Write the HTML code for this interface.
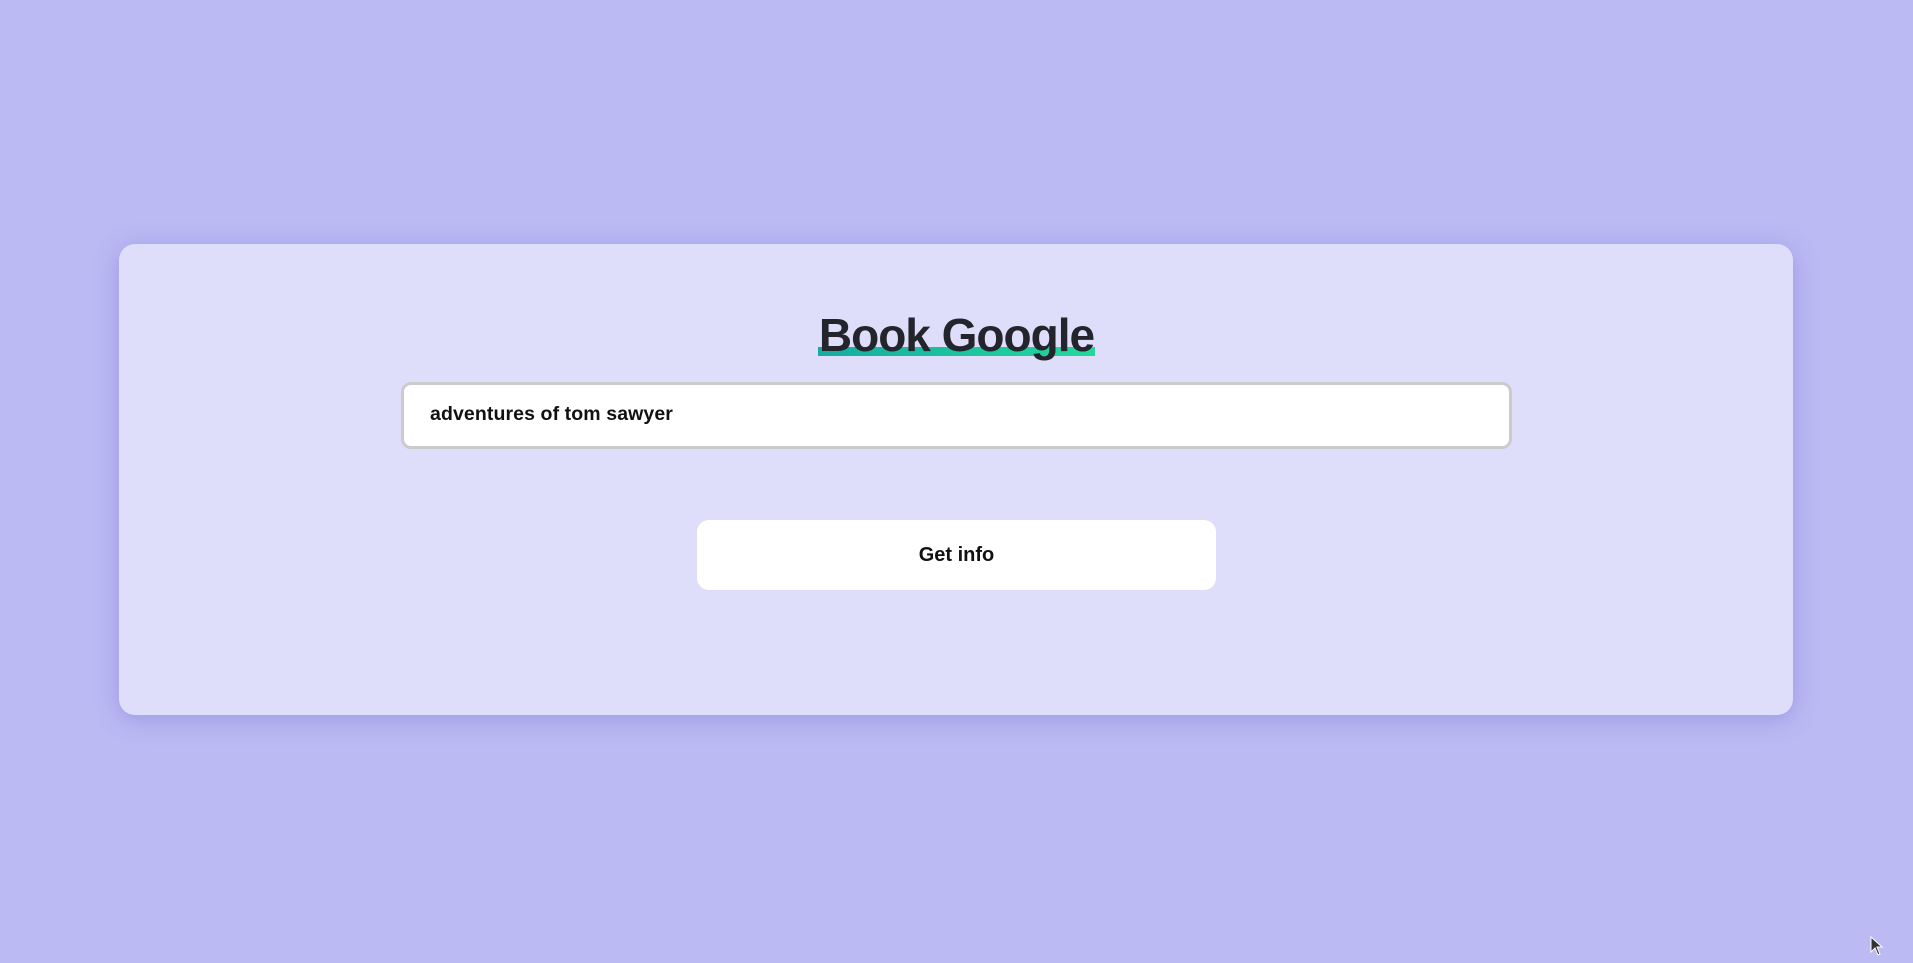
<!DOCTYPE html>
<html><head><style>
html,body{margin:0;padding:0;width:1913px;height:963px;background:#bbbaf3;font-family:"Liberation Sans",sans-serif;overflow:hidden}
.card{position:absolute;left:119px;top:244px;width:1674px;height:471px;background:#dedefa;border-radius:16px;box-shadow:0 4px 24px rgba(120,110,210,.45)}
.title{position:absolute;left:0;right:0;top:308px;text-align:center;font-size:46px;font-weight:bold;color:#24242c;letter-spacing:-1px;z-index:1}
.title span{position:relative;display:inline-block;padding:0 1px}
.title span:after{content:"";position:absolute;left:0;right:0;bottom:6px;height:9px;background:linear-gradient(90deg,#16aca3,#23d99b);z-index:-1}
.input{position:absolute;left:401px;top:382px;width:1105px;height:61px;background:#fff;border:3px solid #cbcbcb;border-radius:10px;box-sizing:content-box}
.input div{position:absolute;left:26px;top:18px;font-size:19.5px;font-weight:bold;color:#111;letter-spacing:0.1px}
.btn{position:absolute;left:697px;top:520px;width:519px;height:70px;background:#fff;border-radius:12px;text-align:center;line-height:70px;font-size:20px;font-weight:bold;color:#111}
</style></head><body>
<div class="card"></div>
<div class="title"><span>Book Google</span></div>
<div class="input"><div>adventures of tom sawyer</div></div>
<div class="btn">Get info</div>
<svg style="position:absolute;left:1870px;top:936px" width="14" height="20" viewBox="0 0 14 20"><path d="M1 1 L1 16 L5 12 L8 19 L10 18 L7 11 L12 11 Z" fill="#333" stroke="#fff" stroke-width="1"/></svg>
</body></html>
